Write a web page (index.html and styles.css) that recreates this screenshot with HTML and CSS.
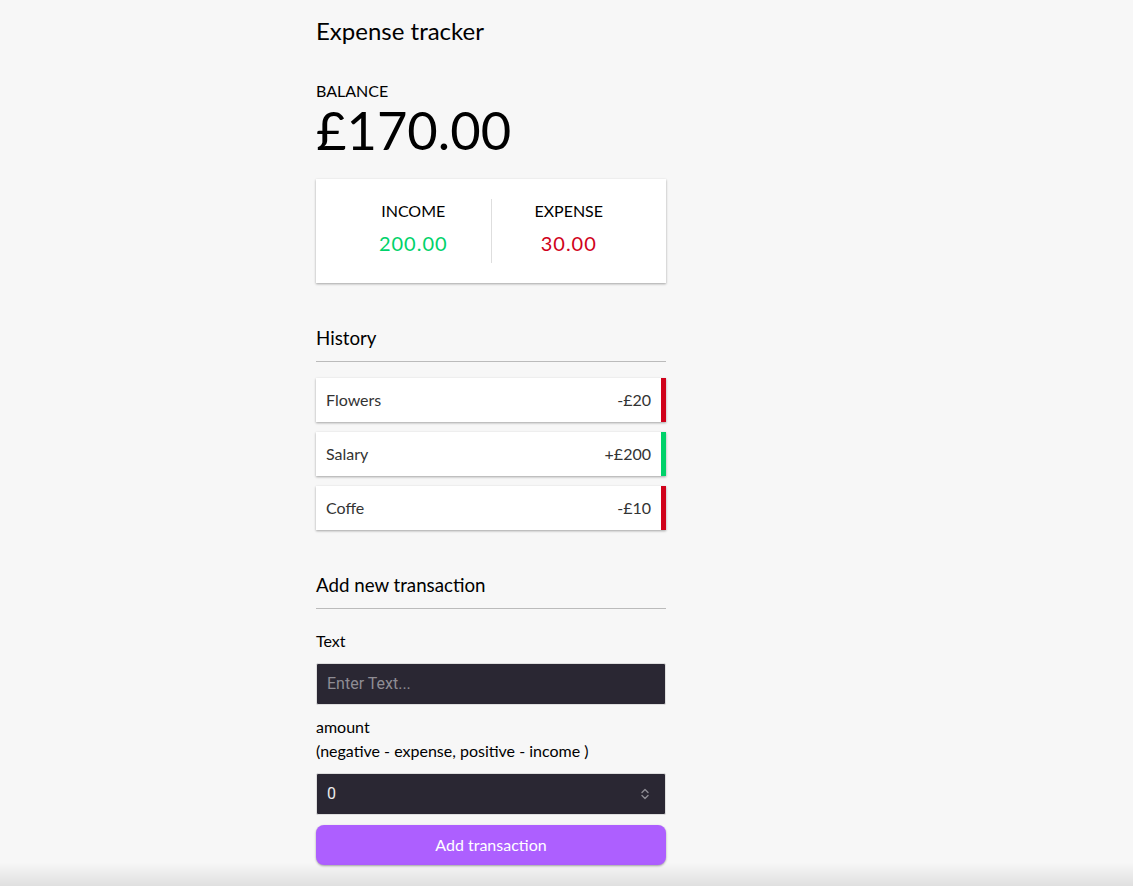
FILE: index.html
```html
<!DOCTYPE html>
<html lang="en">
<head>
<meta charset="UTF-8">
<title>Expense Tracker</title>
<link rel="stylesheet" href="styles.css">
</head>
<body>
<div class="container">
  <h2 class="title">Expense tracker</h2>
  <h4 class="balance-label">Balance</h4>
  <h1 class="balance">£170.00</h1>

  <div class="inc-exp">
    <div class="inc-exp-col">
      <h4 class="inc-exp-label">Income</h4>
      <p class="money plus">200.00</p>
    </div>
    <div class="inc-exp-col">
      <h4 class="inc-exp-label">Expense</h4>
      <p class="money minus">30.00</p>
    </div>
  </div>

  <h3 class="section-title">History</h3>
  <ul class="list">
    <li class="item minus"><span>Flowers</span><span>-£20</span></li>
    <li class="item plus"><span>Salary</span><span>+£200</span></li>
    <li class="item minus"><span>Coffe</span><span>-£10</span></li>
  </ul>

  <h3 class="section-title">Add new transaction</h3>
  <form class="form">
    <div class="form-control">
      <label class="label" for="text">Text</label>
      <input class="field" type="text" id="text" placeholder="Enter Text...">
    </div>
    <div class="form-control">
      <label class="label" for="amount">amount <br>(negative - expense, positive - income )</label>
      <div class="number-wrap">
        <input class="field" type="text" id="amount" value="0">
        <svg class="spin" width="10" height="16" viewBox="0 0 10 16" aria-hidden="true">
          <path d="M2 6.5 L5 3.5 L8 6.5" fill="none" stroke="#8d8b93" stroke-width="1.4" stroke-linecap="round" stroke-linejoin="round"/>
          <path d="M2 9.5 L5 12.5 L8 9.5" fill="none" stroke="#8d8b93" stroke-width="1.4" stroke-linecap="round" stroke-linejoin="round"/>
        </svg>
      </div>
    </div>
    <button class="btn" type="button">Add transaction</button>
  </form>
</div>
<div class="bottom-fade"></div>
</body>
</html>
```

FILE: styles.css
```css
* {
  box-sizing: border-box;
}

html, body {
  margin: 0;
  padding: 0;
}

body {
  background-color: #f7f7f7;
  font-family: Lato, "Noto Sans", sans-serif;
  font-size: 16px;
  line-height: 1.5;
  color: #000;
  min-height: 886px;
}

.container {
  width: 350px;
  margin-left: 316px;
  padding-top: 13px;
}

.title {
  font-size: 24px;
  font-weight: 400;
  line-height: 36px;
  margin: 0;
}

.balance-label {
  margin: 30px 0 0;
  font-size: 16px;
  font-weight: 400;
  line-height: 24px;
  text-transform: uppercase;
}

.balance {
  margin: 0;
  font-size: 52.5px;
  font-weight: 400;
  line-height: 53px;
}

.inc-exp {
  background-color: #fff;
  box-shadow: 0 1px 3px rgba(0, 0, 0, 0.12), 0 1px 2px rgba(0, 0, 0, 0.24);
  padding: 20px;
  display: flex;
  margin: 23px 0 0;
}

.inc-exp-col {
  flex: 1;
  text-align: center;
}

.inc-exp-col:first-child {
  border-right: 1px solid #dedede;
}

.inc-exp-label {
  margin: 0;
  font-size: 16px;
  font-weight: 400;
  line-height: 24px;
  text-transform: uppercase;
}

.money {
  font-size: 20px;
  letter-spacing: 1px;
  line-height: 30px;
  margin: 5px 0;
}

.money.plus {
  color: #00d26a;
}

.money.minus {
  color: #d0021b;
}

.section-title {
  font-size: 18.72px;
  font-weight: 400;
  line-height: 1.5;
  border-bottom: 1px solid #bbb;
  padding-bottom: 9px;
  margin: 41px 0 10px;
}

.list {
  list-style-type: none;
  padding: 0;
  margin: 16px 0 40px;
}

.item {
  background-color: #fff;
  box-shadow: 0 1px 3px rgba(0, 0, 0, 0.12), 0 1px 2px rgba(0, 0, 0, 0.24);
  color: #333;
  display: flex;
  justify-content: space-between;
  padding: 10px;
  margin: 10px 0;
}

.item.plus {
  border-right: 5px solid #00d26a;
}

.item.minus {
  border-right: 5px solid #d0021b;
}

.form {
  margin: 0;
}

.label {
  display: inline-block;
  margin: 10px 0;
}

.number-wrap {
  position: relative;
}

.field {
  display: block;
  width: 100%;
  border: 1px solid #dedede;
  border-radius: 2px;
  background-color: #2a2733;
  color: #ececec;
  font-family: Roboto, "Liberation Sans", sans-serif;
  font-size: 16px;
  line-height: 20px;
  padding: 10px;
  margin: 0;
  outline: none;
}

.field::placeholder {
  color: #8e8c94;
}

.spin {
  position: absolute;
  right: 16px;
  top: 13px;
}

.btn {
  cursor: pointer;
  background-color: #ad5fff;
  box-shadow: 0 1px 3px rgba(0, 0, 0, 0.12), 0 1px 2px rgba(0, 0, 0, 0.24);
  color: #fff;
  border: 0;
  border-radius: 8px;
  display: block;
  font-family: Lato, "Noto Sans", sans-serif;
  font-size: 16px;
  line-height: 20px;
  margin: 10px 0 30px;
  padding: 10px;
  width: 100%;
}

.bottom-fade {
  position: fixed;
  left: 0;
  right: 0;
  bottom: 0;
  height: 24px;
  background: linear-gradient(to bottom, rgba(0, 0, 0, 0), rgba(0, 0, 0, 0.09));
  pointer-events: none;
}
```
